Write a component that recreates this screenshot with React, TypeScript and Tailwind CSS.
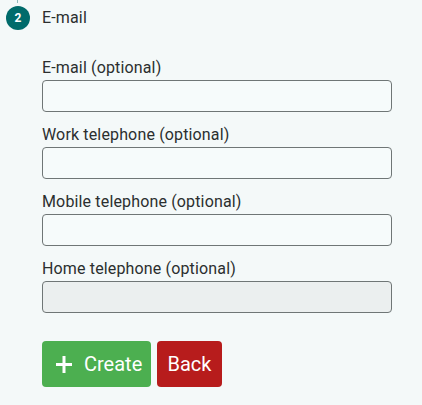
export default function App() {
  const fields = [
    { label: "E-mail (optional)", disabled: false },
    { label: "Work telephone (optional)", disabled: false },
    { label: "Mobile telephone (optional)", disabled: false },
    { label: "Home telephone (optional)", disabled: true },
  ];

  return (
    <div className="min-h-[405px] w-[422px] bg-[#f4f9f9] font-['Roboto',sans-serif] text-[#2b2f2f] relative">
      {/* connector line from previous step */}
      <div className="absolute left-[17px] top-0 h-[3px] w-[1px] bg-[#8fbcbc]" />

      <div className="pt-[6px] pl-[6px] flex items-center h-[30px]">
        <div className="w-[24px] h-[24px] rounded-full bg-[#006b6b] text-white text-[12px] font-bold flex items-center justify-center">
          2
        </div>
        <span className="ml-[12px] text-[16px] tracking-[0.15px]">E-mail</span>
      </div>

      <div className="pl-[42px] pt-[26px] w-[392px]">
        {fields.map((f) => (
          <div key={f.label} className="mb-[11px]">
            <label className="block text-[16px] leading-[24px] tracking-[0.15px]">{f.label}</label>
            <input
              type="text"
              disabled={f.disabled}
              className={`block w-full h-[32px] rounded-[4px] border border-[#6f7676] ${
                f.disabled ? "bg-[#ebefef]" : "bg-[#f6fbfb]"
              }`}
            />
          </div>
        ))}

        <div className="flex gap-[6px] mt-[28px]">
          <button className="h-[46px] w-[109px] rounded-[4px] bg-[#4caf50] text-white text-[20px] flex items-center pl-[14px]">
            <svg width="16" height="17" viewBox="0 0 16 17" className="mr-[12px]">
              <rect x="6.5" y="0" width="3" height="17" fill="white" />
              <rect x="0" y="7" width="16" height="3" fill="white" />
            </svg>
            Create
          </button>
          <button className="h-[46px] w-[65px] rounded-[4px] bg-[#b71c1c] text-white text-[20px] flex items-center justify-center">
            Back
          </button>
        </div>
      </div>
    </div>
  );
}
